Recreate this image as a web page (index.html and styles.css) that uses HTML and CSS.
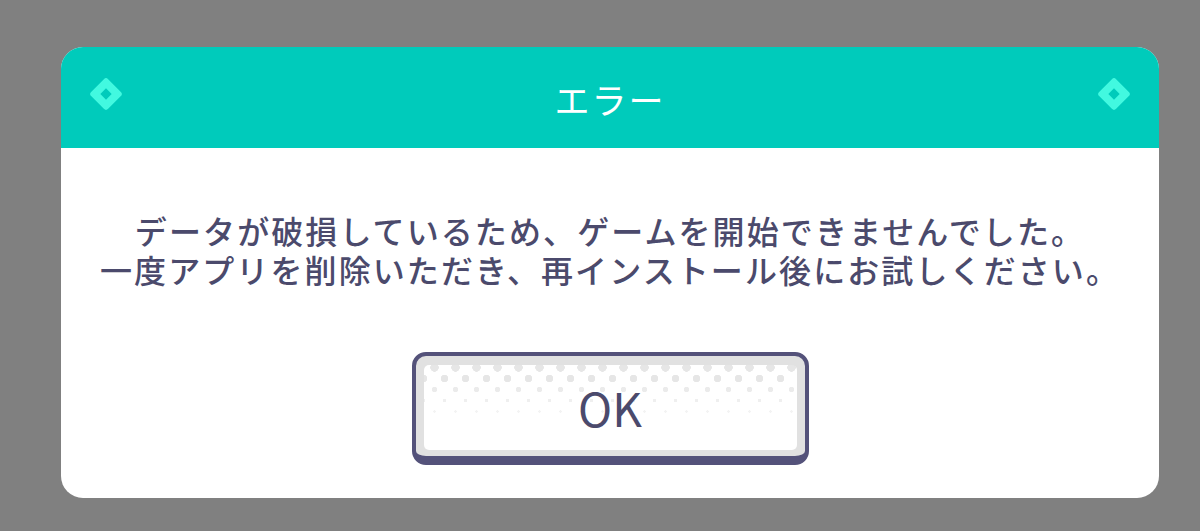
FILE: index.html
```html
<!DOCTYPE html>
<html lang="ja">
<head>
    <meta charset="UTF-8">
    <title>エラー</title>
    <link rel="stylesheet" href="styles.css">
</head>
<body>
    <div class="dialog">
        <div class="dialog-header">
            <span class="diamond"></span>
            <h1 class="dialog-title">エラー</h1>
            <span class="diamond"></span>
        </div>
        <div class="dialog-body">
            <p class="message">
                <span class="line">データが破損しているため、ゲームを開始できませんでした。</span>
                <span class="line">一度アプリを削除いただき、再インストール後にお試しください。</span>
            </p>
            <button class="ok-btn" type="button"><span class="ok-inner">OK</span></button>
        </div>
    </div>
</body>
</html>
```

FILE: styles.css
```css
body {
    margin: 0;
    height: 531px;
    background-color: #808080;
    font-family: "Noto Sans CJK JP", "Noto Sans", sans-serif;
    overflow: hidden;
}

.dialog {
    width: 1098px;
    height: 451px;
    margin: 47px 0 0 61px;
    background-color: #fff;
    border-radius: 22px;
    overflow: hidden;
    display: flex;
    flex-direction: column;
}

/* Teal title bar */
.dialog-header {
    height: 101px;
    background-color: #00cbbb;
    display: flex;
    align-items: center;
    justify-content: space-between;
    padding: 0 33px 8px 33px;
    box-sizing: border-box;
}

.dialog-title {
    margin: 0;
    color: #fff;
    font-size: 35px;
    font-weight: 400;
    letter-spacing: 2px;
    line-height: 1;
    padding-top: 10px;
}

.diamond {
    width: 8px;
    height: 8px;
    border: 8px solid #42f9e0;
    border-radius: 3px;
    transform: rotate(45deg);
}

.dialog-body {
    flex: 1;
    display: flex;
    flex-direction: column;
    align-items: center;
    padding-top: 64px;
}

.message {
    margin: 0;
    display: flex;
    flex-direction: column;
    align-items: center;
    gap: 2px;
    color: #4b4a6c;
    font-size: 32px;
    font-weight: 500;
    line-height: 37px;
    letter-spacing: 2.1px;
    text-align: center;
}

/* OK button */
.ok-btn {
    margin-top: 64px;
    width: 397px;
    height: 113px;
    padding: 9px 8px 6px 8px;
    border: 4px solid #54527a;
    border-bottom-width: 9px;
    border-radius: 14px;
    background-color: #e1e1e1;
    box-sizing: border-box;
    font-family: inherit;
    cursor: pointer;
}

.ok-inner {
    display: flex;
    align-items: center;
    justify-content: center;
    height: 100%;
    border-radius: 5px;
    background-color: #fff;
    background-image:
        radial-gradient(circle, #e6e6e6 4px, transparent 4.5px),
        radial-gradient(circle, #e6e6e6 3.5px, transparent 4px),
        radial-gradient(circle, #ebebeb 2.5px, transparent 3px),
        radial-gradient(circle, #efefef 1.5px, transparent 2px),
        radial-gradient(circle, #f3f3f3 1px, transparent 1.5px);
    background-size: 21px 11px;
    background-repeat: repeat-x;
    background-position: 0 -3px, 10px 8px, 0 19px, 10px 30px, 0 41px;
    color: #4b4a6c;
    font-size: 46px;
    font-weight: 400;
    padding-bottom: 2px;
    box-sizing: border-box;
}
```
